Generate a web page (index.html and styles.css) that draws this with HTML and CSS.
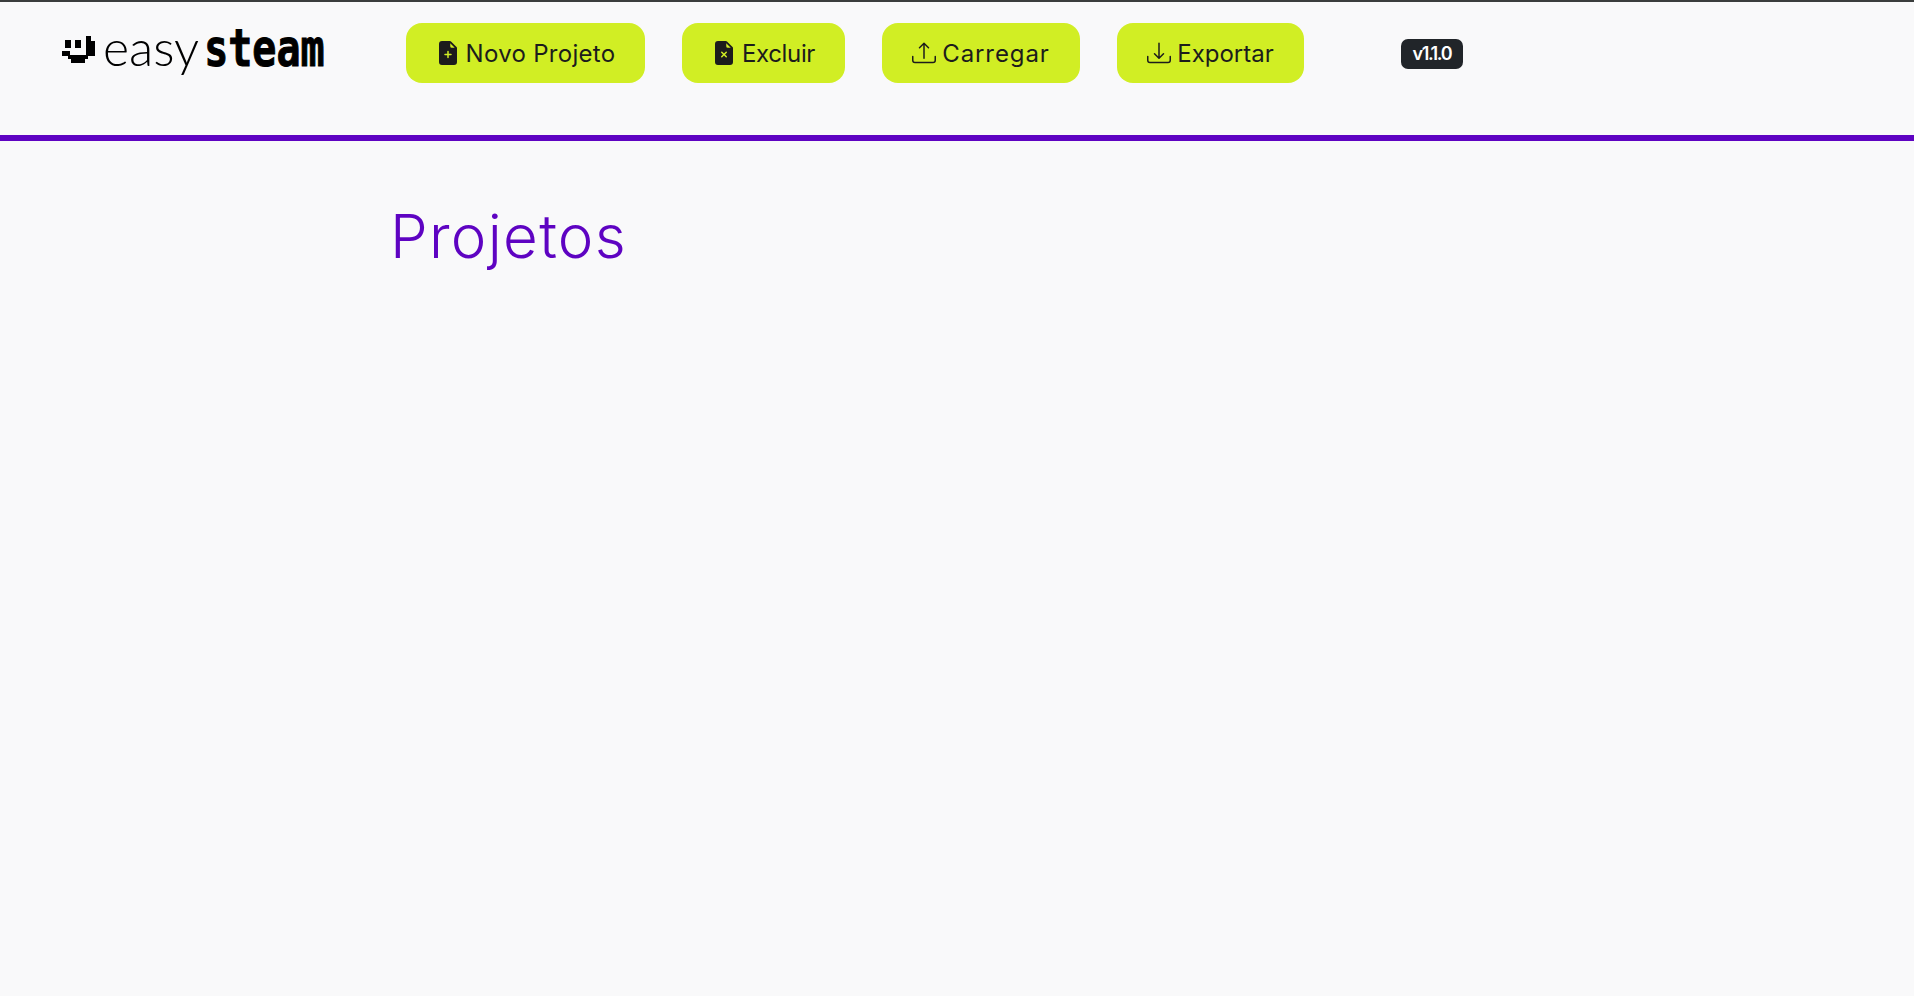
FILE: index.html
```html
<!DOCTYPE html>
<html lang="pt-BR">
<head>
<meta charset="utf-8">
<title>easy steam</title>
<link rel="stylesheet" href="styles.css">
</head>
<body>
<header class="topbar">
  <a class="logo" href="#">
    <svg class="logo-mark" viewBox="0 0 33 29" aria-hidden="true">
      <path d="M3 5h6v8H3zM13 5h6v8h-6zM24 1h5v5h4v15h-7v3h-3v4H9v-4H6v-3H0v-5h8v4h16z"/>
    </svg>
    <span class="logo-easy">easy</span>
    <span class="logo-steam">steam</span>
  </a>
  <nav class="actions">
    <button class="btn btn-new" type="button">
      <svg class="icon" viewBox="0 0 16 16"><path d="M9.293 0H4a2 2 0 0 0-2 2v12a2 2 0 0 0 2 2h8a2 2 0 0 0 2-2V4.707A1 1 0 0 0 13.707 4L10 .293A1 1 0 0 0 9.293 0zM9.5 3.5v-2l3 3h-2a1 1 0 0 1-1-1zM8.5 7v1.5H10a.5.5 0 0 1 0 1H8.5V11a.5.5 0 0 1-1 0V9.5H6a.5.5 0 0 1 0-1h1.5V7a.5.5 0 0 1 1 0z"/></svg>
      Novo Projeto
    </button>
    <button class="btn btn-delete" type="button">
      <svg class="icon" viewBox="0 0 16 16"><path d="M9.293 0H4a2 2 0 0 0-2 2v12a2 2 0 0 0 2 2h8a2 2 0 0 0 2-2V4.707A1 1 0 0 0 13.707 4L10 .293A1 1 0 0 0 9.293 0zM9.5 3.5v-2l3 3h-2a1 1 0 0 1-1-1zM6.854 7.146 8 8.293l1.146-1.147a.5.5 0 1 1 .708.708L8.707 9l1.147 1.146a.5.5 0 0 1-.708.708L8 9.707l-1.146 1.147a.5.5 0 0 1-.708-.708L7.293 9 6.146 7.854a.5.5 0 1 1 .708-.708z"/></svg>
      Excluir
    </button>
    <button class="btn btn-upload" type="button">
      <svg class="icon" viewBox="0 0 16 16"><path d="M.5 9.9a.5.5 0 0 1 .5.5v2.5a1 1 0 0 0 1 1h12a1 1 0 0 0 1-1v-2.5a.5.5 0 0 1 1 0v2.5a2 2 0 0 1-2 2H2a2 2 0 0 1-2-2v-2.5a.5.5 0 0 1 .5-.5z"/><path d="M7.646 1.146a.5.5 0 0 1 .708 0l3 3a.5.5 0 0 1-.708.708L8.5 2.707V11.5a.5.5 0 0 1-1 0V2.707L5.354 4.854a.5.5 0 1 1-.708-.708l3-3z"/></svg>
      Carregar
    </button>
    <button class="btn btn-export" type="button">
      <svg class="icon" viewBox="0 0 16 16"><path d="M.5 9.9a.5.5 0 0 1 .5.5v2.5a1 1 0 0 0 1 1h12a1 1 0 0 0 1-1v-2.5a.5.5 0 0 1 1 0v2.5a2 2 0 0 1-2 2H2a2 2 0 0 1-2-2v-2.5a.5.5 0 0 1 .5-.5z"/><path d="M7.646 11.854a.5.5 0 0 0 .708 0l3-3a.5.5 0 0 0-.708-.708L8.5 10.293V1.5a.5.5 0 0 0-1 0v8.793L5.354 8.146a.5.5 0 1 0-.708.708l3 3z"/></svg>
      Exportar
    </button>
    <span class="version">v1.1.0</span>
  </nav>
</header>
<main class="content">
  <h1 class="title">Projetos</h1>
</main>
</body>
</html>
```

FILE: styles.css
```css
* { box-sizing: border-box; }

html, body { height: 100%; }

body {
  margin: 0;
  background: #f9f9fa;
  color: #1c1c1c;
  font-family: Inter, "Noto Sans", sans-serif;
}

.topbar {
  display: flex;
  align-items: flex-start;
  height: 141px;
  padding: 21px 0 0 62px;
  border-top: 2px solid #3a3d3d;
  border-bottom: 6px solid #5e03c2;
}

.logo {
  display: flex;
  align-items: center;
  width: 344px;
  height: 60px;
  color: #000;
  text-decoration: none;
}

.logo-mark {
  width: 33px;
  height: 29px;
  margin-top: -8px;
  fill: #000;
  flex: none;
}

.logo-easy {
  margin-left: 8px;
  margin-top: -12px;
  font-family: Lato, sans-serif;
  font-size: 50px;
  font-weight: 300;
  line-height: 1;
}

.logo-steam {
  display: inline-block;
  margin-left: 5px;
  margin-top: -10px;
  font-family: "DejaVu Sans Mono", monospace;
  font-size: 40px;
  font-weight: 700;
  line-height: 1;
  -webkit-text-stroke: 0.8px #000;
  transform: scaleY(1.3);
}

.actions {
  display: flex;
  align-items: center;
  gap: 37px;
}

.btn {
  display: flex;
  align-items: center;
  justify-content: center;
  gap: 6px;
  height: 60px;
  padding: 0;
  border: 0;
  border-radius: 16px;
  background: #d1ee24;
  color: #1c1c1c;
  font-family: inherit;
  font-size: 24px;
  font-weight: 420;
}

.btn-new { width: 239px; letter-spacing: 0.3px; }
.btn-delete { width: 163px; letter-spacing: -0.35px; }
.btn-upload { width: 198px; letter-spacing: 0.9px; }
.btn-export { width: 187px; }

.icon {
  width: 24px;
  height: 24px;
  fill: currentColor;
  flex: none;
}

.version {
  margin-left: 60px;
  margin-top: 2px;
  padding: 5px 11.5px;
  border-radius: 7px;
  background: #212529;
  color: #fff;
  font-size: 18px;
  font-weight: 600;
  line-height: 20px;
  letter-spacing: -1.4px;
}

.content {
  padding: 56px 0 0 390px;
}

.title {
  margin: 0;
  color: #5e03c2;
  font-size: 60px;
  font-weight: 300;
  line-height: 1.3;
  letter-spacing: 1.3px;
}
```
